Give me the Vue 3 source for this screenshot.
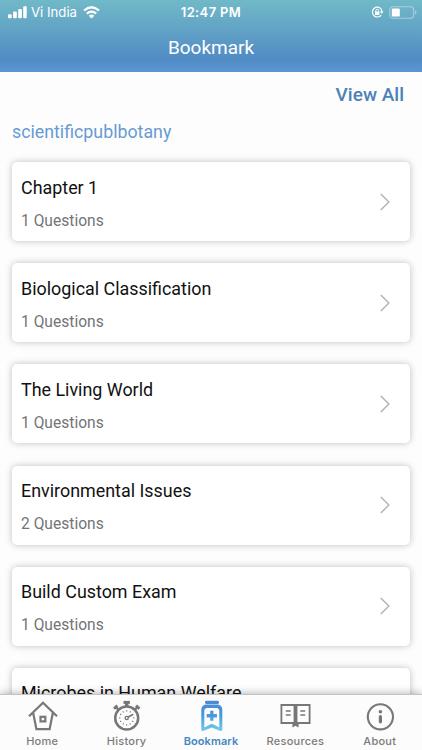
<script setup>
const chapters = [
  { title: 'Chapter 1', count: 1 },
  { title: 'Biological Classification', count: 1 },
  { title: 'The Living World', count: 1 },
  { title: 'Environmental Issues', count: 2 },
  { title: 'Build Custom Exam', count: 1 },
  { title: 'Microbes in Human Welfare', count: 1 },
]
const ticks = Array.from({ length: 12 }, (_, i) => i * 30)
</script>

<template>
  <div class="screen">
    <header class="header">
      <div class="status">
        <div class="carrier">
          <svg class="signal" width="19" height="13" viewBox="0 0 19 13" fill="#fff">
            <rect x="0" y="8.2" width="3.7" height="4" rx="1" />
            <rect x="5.1" y="5.6" width="3.7" height="6.6" rx="1" />
            <rect x="10.2" y="3" width="3.7" height="9.2" rx="1" />
            <rect x="15.2" y="0.2" width="3.5" height="12" rx="1" />
          </svg>
          <span class="carrier-name">Vi India</span>
          <svg class="wifi" width="17" height="13" viewBox="0 0 17 13" fill="none" stroke="#fff" stroke-width="2.3">
            <path d="M1 4.5Q8.5-1.9 16 4.5" />
            <path d="M3.8 7.6Q8.5 3.6 13.2 7.6" />
            <path d="M5.8 9.7Q8.5 7.4 11.2 9.7L8.5 12.4Z" fill="#fff" stroke="none" />
          </svg>
        </div>
        <span class="time">12:47 PM</span>
        <div class="indicators">
          <svg width="13" height="13" viewBox="0 0 13 13" fill="none" stroke="#fff">
            <path d="M10.2 3.1A4.9 4.9 0 1 0 10.2 9.1" stroke-width="1.2" />
            <path d="M10.2 3.1Q10.9 4.3 10.8 6" stroke-width="1.2" />
            <path d="M8.8 5.5H12.5L10.7 7.8Z" fill="#fff" stroke="none" />
            <rect x="4" y="5.6" width="4.4" height="3.5" rx=".5" fill="#fff" stroke="none" />
            <path d="M4.8 6V4.7a1.4 1.4 0 0 1 2.8 0V6" />
          </svg>
          <svg width="28" height="13" viewBox="0 0 28 13">
            <rect x=".8" y=".7" width="23.8" height="11.6" rx="3" fill="none" stroke="#fff" stroke-opacity=".4" stroke-width="1.1" />
            <rect x="2.8" y="2.4" width="8" height="8.2" rx="1.2" fill="#fff" />
            <path d="M26 4.5q1.5.4 1.5 2t-1.5 2z" fill="#fff" fill-opacity=".4" />
          </svg>
        </div>
      </div>
      <h1 class="title">Bookmark</h1>
    </header>

    <main class="content">
      <div class="view-all"><a>View All</a></div>
      <h2 class="subject">scientificpublbotany</h2>
      <div class="list">
        <article v-for="c in chapters" :key="c.title" class="card">
          <div>
            <h3 class="card-title">{{ c.title }}</h3>
            <p class="card-count">{{ c.count }} Questions</p>
          </div>
          <svg width="10" height="18" viewBox="0 0 10 18" fill="none" stroke="#b2b2b4" stroke-width="1.4">
            <path d="M.8 1L8.9 9L.8 17" />
          </svg>
        </article>
      </div>
    </main>

    <nav class="tabs">
      <a class="tab">
        <svg width="32" height="32" viewBox="0 0 32 32" fill="none" stroke="#777" stroke-width="2.2">
          <path d="M3 16.3L17 2.7L31 16.3M7.2 13L10.4 29.2H23.6L26.8 13" />
          <rect x="14.5" y="16.8" width="4.8" height="4.6" />
        </svg>
        <span>Home</span>
      </a>
      <a class="tab">
        <svg width="32" height="32" viewBox="0 0 32 32" fill="none" stroke="#777">
          <circle cx="15.7" cy="17.9" r="11.5" stroke-width="2.5" />
          <path d="M12.5 2.4H18.9" stroke-width="3" />
          <path d="M15.7 3V7" stroke-width="3.4" />
          <path d="M3 8.8L6.3 5.5M25.1 5.5L28.4 8.8" stroke-width="2.8" />
          <path d="M5.2 7.4L7.7 9.9M26.2 7.4L23.7 9.9" stroke-width="2.2" />
          <path v-for="angle in ticks" :key="angle" d="M15.7 10.2V11.6" stroke-width="1" :transform="`rotate(${angle} 15.7 17.9)`" />
          <circle cx="15.7" cy="17.9" r="1.6" stroke-width="1.3" />
          <path d="M16.9 17.3L21.9 14.5" stroke-width="1.8" />
        </svg>
        <span>History</span>
      </a>
      <a class="tab active">
        <svg width="32" height="32" viewBox="0 0 32 32">
          <defs>
            <linearGradient id="bookmark-fill" x1="0" y1="0" x2="0" y2="1">
              <stop stop-color="#4c87d3" />
              <stop offset=".5" stop-color="#489ade" />
              <stop offset="1" stop-color="#70cdea" />
            </linearGradient>
          </defs>
          <path fill="url(#bookmark-fill)" fill-rule="evenodd" d="M11.4 .7H22.6Q24.1 .7 24.1 2.3T22.6 4H11.4Q9.9 4 9.9 2.3T11.4 .7M10.5 4.4H23.1Q27.3 5.6 27.3 9.6V29.4Q27.3 31.8 24.8 30.8L16.8 27.4L8.8 30.8Q6.3 31.8 6.3 29.4V9.6Q6.3 5.6 10.5 4.4M11.5 8Q9.3 8.4 9.3 10.8V27.4L15.6 24.2Q16.8 23.6 18 24.2L24.3 27.4V10.8Q24.3 8.4 22.1 8ZM15.2 10.8H18.4V14.1H21.9V17.4H18.4V20.7H15.2V17.4H11.7V14.1H15.2Z" />
        </svg>
        <span>Bookmark</span>
      </a>
      <a class="tab">
        <svg width="32" height="32" viewBox="0 0 32 32" fill="none" stroke="#777">
          <path d="M2.4 5H30.6V23H2.4Z" stroke-width="1.8" />
          <path d="M16.5 4.2V23.5" stroke-width="3.8" />
          <path d="M6.8 11H11.7M6.8 15H11.7M21.3 11H26.2M21.3 15H26.2" stroke-width="1.6" />
          <path d="M13.4 23H19.6V27.4L16.5 25.7L13.4 27.4Z" fill="#777" stroke="none" />
        </svg>
        <span>Resources</span>
      </a>
      <a class="tab">
        <svg width="32" height="32" viewBox="0 0 32 32" fill="none" stroke="#777">
          <circle cx="16.4" cy="16.8" r="12.6" stroke-width="2.1" />
          <circle cx="16.4" cy="11.7" r="1.8" fill="#777" stroke="none" />
          <path d="M16.4 16.5V21.8" stroke-width="3.2" stroke-linecap="round" />
        </svg>
        <span>About</span>
      </a>
    </nav>
  </div>
</template>

<style>
body {
  margin: 0;
  background: #fdfdfd;
}
</style>

<style scoped>
* {
  box-sizing: border-box;
}
.screen {
  display: flex;
  flex-direction: column;
  width: 422px;
  height: 750px;
  overflow: hidden;
  background: #fdfdfd;
  font-family: Roboto, "Liberation Sans", sans-serif;
}
h1, h2, h3, p {
  margin: 0;
  font-weight: 400;
}
svg {
  display: block;
  flex: none;
}
.header {
  flex: none;
  height: 72px;
  background: linear-gradient(#70b9c7, #62a2c6 43%, #518bc4 82%, #5c95d6);
  color: #fff;
}
.status {
  display: grid;
  grid-template-columns: 1fr auto 1fr;
  align-items: center;
  height: 24px;
  padding: 0 7px 0 8px;
  font-family: Inter, sans-serif;
}
.carrier {
  display: flex;
  align-items: center;
}
.carrier-name {
  margin-left: 4px;
  font-size: 13.2px;
}
.wifi {
  margin-left: 5.5px;
}
.time {
  font-size: 13px;
  font-weight: 600;
  letter-spacing: .35px;
  margin-right: 1px;
}
.indicators {
  display: flex;
  justify-content: flex-end;
  gap: 5px;
  margin-right: -2px;
}
.title {
  font-size: 19px;
  line-height: 24px;
  margin-top: 12px;
  text-align: center;
}
.content {
  flex: 1;
  min-height: 0;
  overflow: hidden;
}
.view-all {
  height: 46px;
  padding: 11px 18px 0;
  text-align: right;
  color: #4c83b7;
  font-size: 19px;
  font-weight: 500;
  line-height: 24px;
}
.subject {
  height: 44px;
  padding: 4px 12px 3px;
  color: #679bd3;
  font-size: 17.8px;
  line-height: 20px;
}
.list {
  display: grid;
  gap: 22.2px;
  padding: 0 12px;
}
.card {
  display: flex;
  align-items: center;
  justify-content: space-between;
  height: 79px;
  padding: 0 20px 0 9px;
  background: #fff;
  border-radius: 5px;
  box-shadow: 0 0 7px rgba(0, 0, 0, .25);
}
.card-title {
  margin-top: 4px;
  color: #111;
  font-size: 17.9px;
  line-height: 24px;
}
.card-count {
  margin-top: 10px;
  color: #747474;
  font-size: 15.6px;
  line-height: 22px;
}
.tabs {
  position: relative;
  display: grid;
  grid-template-columns: repeat(5, 1fr);
  flex: none;
  height: 56px;
  background: #fcfcfc;
  border-top: 1px solid #c4c4c4;
  box-shadow: 0 -1px 8px rgba(0, 0, 0, .28);
}
.tab {
  display: flex;
  flex-direction: column;
  align-items: center;
  padding-top: 5px;
  color: #7b7b7b;
  font-family: Inter, sans-serif;
  font-size: 11px;
  font-weight: 500;
  line-height: 14px;
  letter-spacing: .25px;
}
.tab span {
  margin-top: 2px;
}
.active {
  color: #4687c1;
  font-weight: 600;
  letter-spacing: .1px;
}
</style>
